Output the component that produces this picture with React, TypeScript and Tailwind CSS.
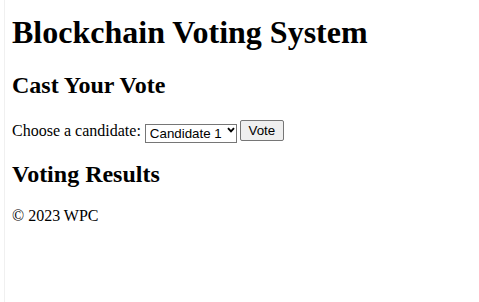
import { useState } from 'react'

const candidates = ['Candidate 1', 'Candidate 2', 'Candidate 3']

export default function App() {
    const [choice, setChoice] = useState(candidates[0])

    return (
        <div className="min-h-[302px] w-[479px] bg-white text-black font-['Liberation_Serif','Times_New_Roman',serif]">
            <div className="ml-[4px] min-h-[302px] border-l border-[#f0f0f0] pl-[7px]">
                <h1 className="pt-[14px] text-[32px] font-bold leading-[37px]">Blockchain Voting System</h1>

                <h2 className="mt-[20px] text-[24px] font-bold leading-[28px]">Cast Your Vote</h2>

                <form
                    className="mt-[21px] flex h-[21px] items-center"
                    onSubmit={(e) => e.preventDefault()}
                >
                    <label htmlFor="candidate" className="text-[16px] leading-[18px]">
                        Choose a candidate:
                    </label>
                    <div className="relative ml-[4px] h-[19px] w-[92px]">
                        <select
                            id="candidate"
                            value={choice}
                            onChange={(e) => setChoice(e.target.value)}
                            className="h-full w-full appearance-none rounded-none border border-[#767676] bg-white pl-[4px] text-[13.33px] leading-[17px] text-black font-['Liberation_Sans',Arial,sans-serif] outline-none"
                        >
                            {candidates.map((c) => (
                                <option key={c} value={c}>
                                    {c}
                                </option>
                            ))}
                        </select>
                        {/* chevron drawn over the select */}
                        <svg
                            className="pointer-events-none absolute right-[2px] top-[6px] h-[6px] w-[8px]"
                            viewBox="0 0 8 6"
                            fill="none"
                        >
                            <path d="M1 1.2 L4 4.3 L7 1.2" stroke="#000" strokeWidth="1.9" />
                        </svg>
                    </div>
                    <button
                        type="submit"
                        className="ml-[3px] h-[21px] w-[44px] rounded-[2px] border border-[#767676] bg-[#efefef] text-[13.33px] leading-[17px] text-black font-['Liberation_Sans',Arial,sans-serif]"
                    >
                        Vote
                    </button>
                </form>

                <h2 className="mt-[19px] text-[24px] font-bold leading-[28px]">Voting Results</h2>

                <footer className="mt-[19px] text-[16px] leading-[18px]">© 2023 WPC</footer>
            </div>
        </div>
    )
}
